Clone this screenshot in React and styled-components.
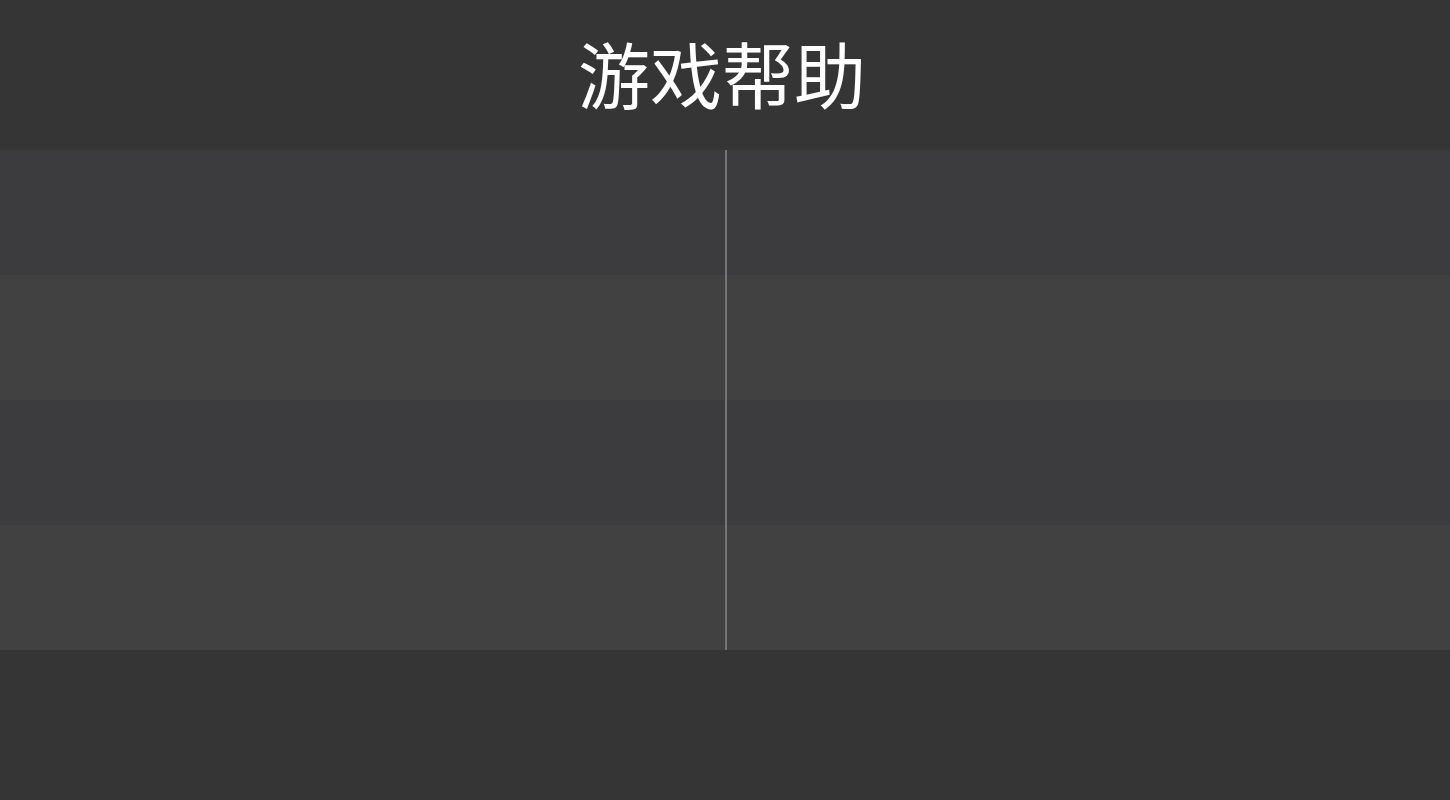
import styled, { createGlobalStyle } from "styled-components";

const GlobalStyle = createGlobalStyle`
  html, body {
    margin: 0;
    padding: 0;
    background: #353535;
  }
  body {
    font-family: "Noto Sans CJK SC", "Noto Sans", sans-serif;
  }
`;

const Page = styled.div`
  width: 1450px;
  height: 800px;
  background: #353535;
  overflow: hidden;
`;

const Header = styled.div`
  height: 150px;
  display: flex;
  align-items: center;
  justify-content: center;
`;

const Title = styled.h1`
  margin: 0;
  font-size: 72px;
  font-weight: 400;
  color: #ffffff;
  line-height: 1;
  transform: translate(-3px, -3px);
`;

const Board = styled.div`
  position: relative;
  display: flex;
  flex-direction: column;
`;

const Row = styled.div`
  height: 125px;
  display: grid;
  grid-template-columns: 725px 1fr;
  background: ${(props) => (props.alt ? "#414141" : "#3c3b3e")};
`;

const Cell = styled.div`
  height: 100%;
`;

const Divider = styled.div`
  position: absolute;
  left: 725px;
  top: 0;
  bottom: 0;
  width: 2px;
  background: #747476;
`;

const rows = [false, true, false, true];

const App = () => {
  return (
    <Page>
      <GlobalStyle />
      <Header>
        <Title>游戏帮助</Title>
      </Header>
      <Board>
        {rows.map((alt, i) => (
          <Row key={i} alt={alt}>
            <Cell />
            <Cell />
          </Row>
        ))}
        <Divider />
      </Board>
    </Page>
  );
};

export default App;
